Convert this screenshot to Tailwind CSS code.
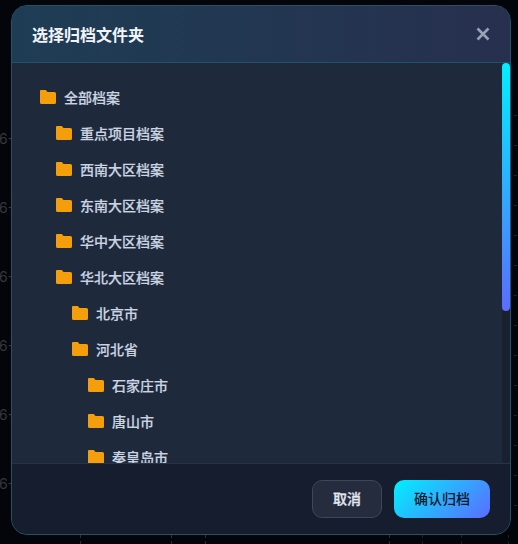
<!DOCTYPE html>
<html>
<head>
    <meta charset="utf-8">
    <title>选择归档文件夹</title>
    <script src="https://cdn.jsdelivr.net/npm/@tailwindcss/browser@4"></script>
</head>
<body class="bg-[#03050b] h-[544px] overflow-hidden relative font-['Inter','Noto_Sans_CJK_SC',sans-serif]">
    <!-- chart behind the dialog -->
    <div class="absolute -left-px top-[132px] flex flex-col gap-[55px] text-sm leading-[14px] text-[#34373c]">
        <span>6-</span><span>6-</span><span>6-</span><span>6-</span><span>6-</span><span>6-</span>
    </div>
    <div class="absolute left-[514px] top-[115px] w-[3px] h-[400px] bg-[repeating-linear-gradient(to_bottom,#0f2630_0,#0f2630_1px,transparent_1px,transparent_30px)]"></div>
    <div class="absolute left-[80px] top-[535px] h-[9px] border-l border-dashed border-[#2c3036]"></div>
    <div class="absolute left-[171px] top-[535px] h-[9px] border-l border-dashed border-[#2c3036]"></div>
    <div class="absolute left-[205px] top-[535px] h-[9px] border-l border-dashed border-[#2c3036]"></div>
    <div class="absolute left-[389px] top-[535px] h-[9px] border-l border-dashed border-[#2c3036]"></div>
    <div class="absolute left-[422px] top-[535px] h-[9px] border-l border-dashed border-[#1c2026]"></div>
    <div class="absolute left-[461px] top-[535px] h-[9px] border-l border-dashed border-[#1c2026]"></div>
    <div class="absolute left-[508px] top-[535px] h-[9px] border-l border-dashed border-[#1c2026]"></div>

    <!-- dialog -->
    <div class="absolute left-[11px] top-[5px] w-[500px] h-[530px] flex flex-col rounded-2xl overflow-hidden border border-[#1d5566] bg-[#1e293b]">
        <div class="h-[57px] shrink-0 flex items-center justify-between px-5 bg-[linear-gradient(90deg,#1e3d54,#27304e)] border-b border-[#1d5566]">
            <h2 class="pt-px text-base font-bold text-[#f1f5f9]">选择归档文件夹</h2>
            <svg class="w-[14px] h-[14px]" viewBox="0 0 14 14" fill="none" stroke="#94a3b8" stroke-width="2.6"><path d="M1.5 1.5l11 11M12.500 1.5l-11 11"/></svg>
        </div>

        <div class="relative h-[400px] shrink-0 overflow-hidden p-4">
            <div class="flex flex-col text-sm font-medium text-[#cbd5e1] [-webkit-text-stroke:0.2px_#cbd5e1]">
                <div class="h-9 shrink-0 flex items-center gap-2 px-3"><svg class="w-4 h-4" viewBox="0 0 16 16" fill="#f59e0b"><path d="M1 1h4.800l1.700 2h7q1.500 0 1.500 1.500v9q0 1.500-1.500 1.500h-13q-1.500 0-1.500-1.500v-11.500q0-1 1-1z"/></svg><span class="pt-px">全部档案</span></div>
                <div class="h-9 shrink-0 flex items-center gap-2 px-3 ml-4"><svg class="w-4 h-4" viewBox="0 0 16 16" fill="#f59e0b"><path d="M1 1h4.800l1.700 2h7q1.500 0 1.500 1.500v9q0 1.500-1.500 1.500h-13q-1.500 0-1.500-1.500v-11.500q0-1 1-1z"/></svg><span class="pt-px">重点项目档案</span></div>
                <div class="h-9 shrink-0 flex items-center gap-2 px-3 ml-4"><svg class="w-4 h-4" viewBox="0 0 16 16" fill="#f59e0b"><path d="M1 1h4.800l1.700 2h7q1.500 0 1.500 1.500v9q0 1.500-1.500 1.500h-13q-1.500 0-1.500-1.500v-11.500q0-1 1-1z"/></svg><span class="pt-px">西南大区档案</span></div>
                <div class="h-9 shrink-0 flex items-center gap-2 px-3 ml-4"><svg class="w-4 h-4" viewBox="0 0 16 16" fill="#f59e0b"><path d="M1 1h4.800l1.700 2h7q1.500 0 1.500 1.500v9q0 1.500-1.500 1.500h-13q-1.500 0-1.500-1.500v-11.500q0-1 1-1z"/></svg><span class="pt-px">东南大区档案</span></div>
                <div class="h-9 shrink-0 flex items-center gap-2 px-3 ml-4"><svg class="w-4 h-4" viewBox="0 0 16 16" fill="#f59e0b"><path d="M1 1h4.800l1.700 2h7q1.500 0 1.500 1.500v9q0 1.500-1.500 1.500h-13q-1.500 0-1.500-1.500v-11.500q0-1 1-1z"/></svg><span class="pt-px">华中大区档案</span></div>
                <div class="h-9 shrink-0 flex items-center gap-2 px-3 ml-4"><svg class="w-4 h-4" viewBox="0 0 16 16" fill="#f59e0b"><path d="M1 1h4.800l1.700 2h7q1.500 0 1.500 1.500v9q0 1.500-1.500 1.500h-13q-1.500 0-1.500-1.500v-11.500q0-1 1-1z"/></svg><span class="pt-px">华北大区档案</span></div>
                <div class="h-9 shrink-0 flex items-center gap-2 px-3 ml-8"><svg class="w-4 h-4" viewBox="0 0 16 16" fill="#f59e0b"><path d="M1 1h4.800l1.700 2h7q1.500 0 1.500 1.500v9q0 1.500-1.500 1.500h-13q-1.500 0-1.500-1.500v-11.500q0-1 1-1z"/></svg><span class="pt-px">北京市</span></div>
                <div class="h-9 shrink-0 flex items-center gap-2 px-3 ml-8"><svg class="w-4 h-4" viewBox="0 0 16 16" fill="#f59e0b"><path d="M1 1h4.800l1.700 2h7q1.500 0 1.500 1.500v9q0 1.500-1.500 1.500h-13q-1.500 0-1.500-1.500v-11.500q0-1 1-1z"/></svg><span class="pt-px">河北省</span></div>
                <div class="h-9 shrink-0 flex items-center gap-2 px-3 ml-12"><svg class="w-4 h-4" viewBox="0 0 16 16" fill="#f59e0b"><path d="M1 1h4.800l1.700 2h7q1.500 0 1.500 1.500v9q0 1.500-1.500 1.500h-13q-1.500 0-1.500-1.500v-11.500q0-1 1-1z"/></svg><span class="pt-px">石家庄市</span></div>
                <div class="h-9 shrink-0 flex items-center gap-2 px-3 ml-12"><svg class="w-4 h-4" viewBox="0 0 16 16" fill="#f59e0b"><path d="M1 1h4.800l1.700 2h7q1.500 0 1.500 1.500v9q0 1.500-1.500 1.500h-13q-1.500 0-1.500-1.500v-11.500q0-1 1-1z"/></svg><span class="pt-px">唐山市</span></div>
                <div class="h-9 shrink-0 flex items-center gap-2 px-3 ml-12"><svg class="w-4 h-4" viewBox="0 0 16 16" fill="#f59e0b"><path d="M1 1h4.800l1.700 2h7q1.500 0 1.500 1.500v9q0 1.500-1.500 1.500h-13q-1.500 0-1.500-1.500v-11.500q0-1 1-1z"/></svg><span class="pt-px">秦皇岛市</span></div>
            </div>
            <!-- scrollbar -->
            <div class="absolute right-0 top-0 bottom-0 w-2 rounded bg-[#19202f]">
                <div class="h-[248px] rounded bg-[linear-gradient(180deg,#00f0ff,#5b6cff)]"></div>
            </div>
        </div>

        <div class="flex-1 flex items-center justify-end gap-3 px-5 bg-[#161d2e] border-t border-[#243547]">
            <button class="w-[70px] h-[38px] rounded-[10px] border border-[#3d4759] bg-[#242c3e] text-sm font-medium text-[#e2e8f0] [-webkit-text-stroke:0.3px_#e2e8f0]">取消</button>
            <button class="w-[96px] h-[38px] rounded-[10px] bg-[linear-gradient(135deg,#00f0ff,#5b6cff)] text-sm font-medium text-[#0f172a]">确认归档</button>
        </div>
    </div>
</body>
</html>
